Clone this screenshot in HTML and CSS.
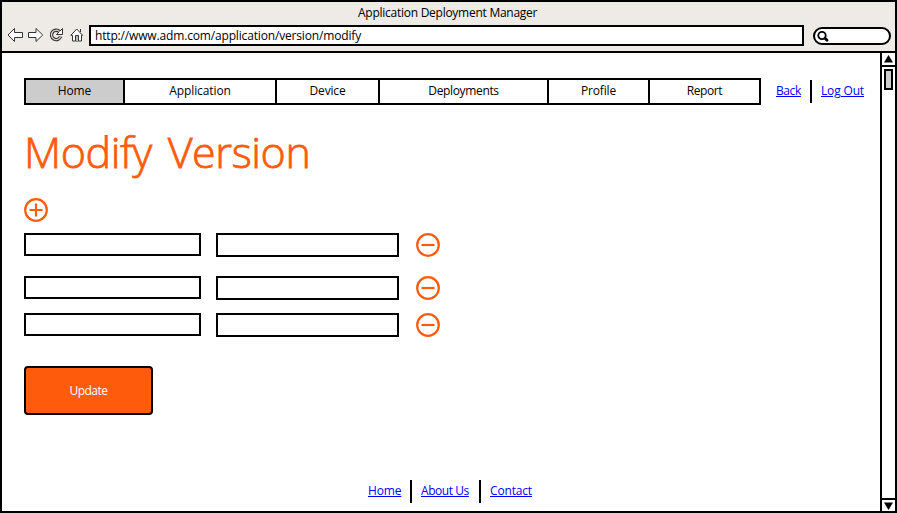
FILE: index.html
```html
<!DOCTYPE html>
<html lang="en">
<head>
<meta charset="utf-8">
<title>Application Deployment Manager</title>
<link rel="stylesheet" href="styles.css">
</head>
<body>
<div class="window">
  <header class="chrome">
    <div class="title"><span>Application Deployment Manager</span></div>
    <div class="toolbar">
      <svg class="tools" width="80" height="18" viewBox="0 0 80 18" fill="#fff" stroke="#333" stroke-width="1">
        <path d="M1 9 7.500 2.500V6.500H15.500V11.500H7.500V15.500Z"/>
        <path d="M35.700 9 29 2.500V6.500H21.500V11.500H29V15.500Z"/>
        <path d="M52.500 5.600A4.700 4.700 0 1 0 53.600 10.500" fill="none" stroke="#333" stroke-width="3.400"/>
        <path d="M55.500 2.500V8.500H49.500Z"/>
        <path d="M52.500 5.600A4.700 4.700 0 1 0 53.600 10.500" fill="none" stroke="#ddd" stroke-width="1.200"/>
        <path d="M63.800 9.300 69.700 3 75.600 9.300H74.500V15H65.500V9.300Z"/>
        <path d="M68.500 15V9.500H71.500V15" fill="#bbb"/>
        <path d="M73.500 3V6" fill="none"/>
      </svg>
      <div class="url"><span>http://www.adm.com/application/version/modify</span></div>
      <div class="search">
        <svg width="14" height="14" viewBox="0 0 14 14" fill="none" stroke="#000"><circle cx="5" cy="5.500" r="3.700" stroke-width="1.800"/><path d="M8 8.300 10 10.300" stroke-width="2.800" stroke-linecap="round"/></svg>
      </div>
    </div>
  </header>
  <div class="body">
    <main class="page">
      <div class="top">
        <nav class="nav">
          <a class="tab home">Home</a><a class="tab app">Application</a><a class="tab device">Device</a><a class="tab deploy">Deployments</a><a class="tab profile">Profile</a><a class="tab report">Report</a>
        </nav>
        <div class="links"><a class="back">Back</a><i></i><a class="logout">Log Out</a></div>
      </div>
      <h1><span>Modify Version</span></h1>
      <svg class="add" width="24" height="24" viewBox="0 0 24 24"><circle cx="12" cy="12" r="10.800"/><path d="M5.500 12H18.500M12 5.500V18.500"/></svg>
      <div class="row first"><div class="name"></div><div class="value"></div><svg width="24" height="24" viewBox="0 0 24 24"><circle cx="12" cy="12" r="10.800"/><path d="M5.500 12H18.500"/></svg></div>
      <div class="row second"><div class="name"></div><div class="value"></div><svg width="24" height="24" viewBox="0 0 24 24"><circle cx="12" cy="12" r="10.800"/><path d="M5.500 12H18.500"/></svg></div>
      <div class="row third"><div class="name"></div><div class="value"></div><svg width="24" height="24" viewBox="0 0 24 24"><circle cx="12" cy="12" r="10.800"/><path d="M5.500 12H18.500"/></svg></div>
      <button class="update">Update</button>
      <footer class="links"><a class="fhome">Home</a><i></i><a class="about">About Us</a><i></i><a class="contact">Contact</a></footer>
    </main>
    <aside class="scroll">
      <svg class="up" width="13" height="12" viewBox="0 0 13 12"><path d="M6.500 2 11 9.500H2Z"/></svg>
      <div class="track"><div class="thumb"></div></div>
      <svg class="down" width="13" height="11" viewBox="0 0 13 11"><path d="M2 2.500H11L6.500 10Z"/></svg>
    </aside>
  </div>
</div>
</body>
</html>
```

FILE: styles.css
```css
* { box-sizing: border-box; }
body { margin: 0; font: 12px/16px "Open Sans", "Noto Sans", sans-serif; letter-spacing: -0.16px; color: #000; overflow: hidden; }
.window { width: 897px; height: 513px; border: 2px solid #000; display: flex; flex-direction: column; background: #fff; }
.chrome { height: 51px; background: #eeeae5; border-bottom: 2px solid #000; flex: none; }
.title { height: 23px; padding: 3px 0 0 356px; letter-spacing: -0.26px; white-space: nowrap; }
.toolbar { display: flex; }
.tools { margin: 1px 2px 0 5px; flex: none; }
.url { width: 715px; height: 21px; border: 2px solid #000; background: #fff; padding: 1px 4px; white-space: nowrap; }
.search { width: 78px; height: 18px; margin: 2px 0 0 9px; border: 2px solid #000; border-radius: 9px; background: #fff; padding-left: 2px; }
.search svg { display: block; margin-top: 1px; }
.body { display: flex; flex: 1; min-height: 0; }
.page { width: 878px; padding: 25px 0 0 22px; }
.top { display: flex; height: 27px; }
.nav { display: flex; width: 737px; height: 27px; border: 2px solid #000; }
.tab { border-right: 2px solid #000; text-align: center; line-height: 22px; }
.home { width: 99px; background: #ccc; }
.app { width: 152px; letter-spacing: -0.1px; }
.device { width: 103px; }
.deploy { width: 169px; letter-spacing: -0.35px; }
.profile { width: 101px; }
.report { flex: 1; border: 0; letter-spacing: -0.4px; }
.links { display: flex; color: #00f; white-space: nowrap; }
.links a { text-decoration: underline; padding-top: 3px; }
.links i { width: 2px; height: 23px; background: #000; flex: none; }
.top .links { padding: 2px 0 0 15px; }
.back { width: 34px; letter-spacing: -0.4px; }
.logout { margin-left: 9px; }
h1 { margin: 18px 0 0; height: 75px; font-size: 43px; line-height: 58px; font-weight: 300; letter-spacing: -0.4px; word-spacing: 5px; color: #ff5b0d; -webkit-text-stroke: 0.8px #ff5b0d; white-space: nowrap; }
.add, .row svg { display: block; fill: none; stroke: #ff5b0d; stroke-width: 2.2; }
.row { display: flex; height: 24px; }
.row svg { margin-left: 16.500px; }
.first { margin-top: 11px; }
.second { margin-top: 19px; }
.third { margin-top: 13px; }
.name { width: 177px; height: 23px; border: 2px solid #000; }
.value { width: 183px; height: 24px; margin-left: 15px; border: 2px solid #000; }
.update { display: block; margin: 29px 0 0; padding: 0; width: 129px; height: 49px; border: 2px solid #000; border-radius: 4px; background: #ff5b0d; color: #fff; font: inherit; letter-spacing: -0.5px; }
footer { margin: 65px 0 0 344px; }
.fhome { width: 42px; }
.about { width: 58px; margin-left: 9px; letter-spacing: -0.45px; }
.contact { margin-left: 9px; }
.scroll { width: 15px; border-left: 2px solid #000; display: flex; flex-direction: column; }
.scroll svg { display: block; flex: none; }
.track { flex: 1; border-top: 2px solid #000; border-bottom: 2px solid #000; padding: 2px; }
.thumb { width: 9px; height: 21px; border: 2px solid #000; background: #ccc; }
```
